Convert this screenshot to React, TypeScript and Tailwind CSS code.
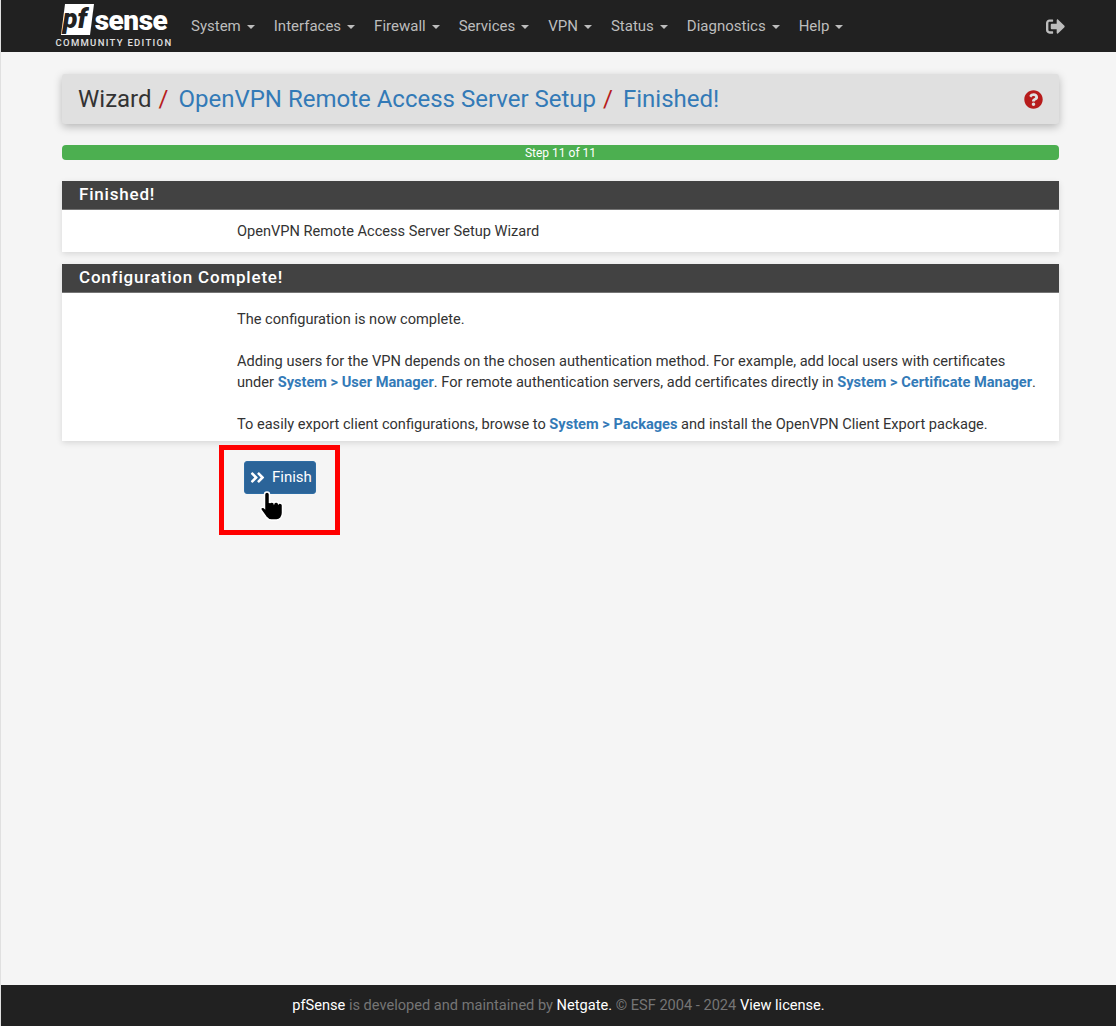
import React from 'react'
import { FaAngleDoubleRight, FaQuestionCircle, FaSignOutAlt } from 'react-icons/fa'

const menus = ['System', 'Interfaces', 'Firewall', 'Services', 'VPN', 'Status', 'Diagnostics', 'Help']

function Logo() {
  return (
    <div className="flex w-[112px] flex-col items-center">
      <div className="flex h-[31px] items-end">
        <div className="relative h-[31px] w-[33px]">
          <svg viewBox="0 0 33 31" className="absolute inset-0 h-full w-full">
            <path d="M4 0H33L29 31H0Z" fill="#fff" />
          </svg>
          <span className="absolute bottom-[1px] left-[2px] text-[27px] leading-[30px] font-black text-[#212121] italic">pf</span>
        </div>
        <span className="ml-[1px] text-[28px] leading-[28px] font-black tracking-[-0.5px] text-white">sense</span>
      </div>
      <span className="mt-[2px] text-[9.5px] leading-[11px] font-medium tracking-[1.3px] whitespace-nowrap text-[#e0e0e0]">COMMUNITY EDITION</span>
    </div>
  )
}

function Navbar() {
  return (
    <nav className="flex h-[52px] items-center bg-[#212121] pr-[51px] pl-[57px]">
      <Logo />
      <ul className="ml-[21px] flex gap-[19px]">
        {menus.map((m) => (
          <li key={m} className="flex items-center gap-[6px] text-[15px] text-[#bdbdbd]">
            {m}
            <span className="mt-[2px] h-0 w-0 border-x-[4px] border-t-[4px] border-x-transparent border-t-[#bdbdbd]" />
          </li>
        ))}
      </ul>
      <FaSignOutAlt className="ml-auto text-[19px] text-[#bdbdbd]" />
    </nav>
  )
}

function Panel({ title, children }: { title: string; children: React.ReactNode }) {
  return (
    <section className="bg-white shadow-[0_2px_6px_rgba(0,0,0,0.12)]">
      <h2 className="flex h-[29px] items-center border-b border-[#757575] bg-[#424242] px-[17px] text-[17px] font-medium tracking-[0.8px] text-white">{title}</h2>
      <div className="pl-[175px] text-[14.6px] leading-[21px] text-[#333]">{children}</div>
    </section>
  )
}

function Link({ children }: { children: React.ReactNode }) {
  return <b className="font-bold text-[#337ab7]">{children}</b>
}

export default function App() {
  return (
    <div className="flex min-h-[1026px] flex-col border-l border-[#e0e0e0] bg-[#f5f5f5] font-['Roboto',sans-serif]">
      <Navbar />
      <main className="relative flex-1 pt-[22px] pr-[57px] pl-[61px]">
        <header className="flex h-[50px] items-center justify-between rounded-[3px] bg-[#e0e0e0] pr-[16px] pl-[16px] text-[24px] text-[#333] shadow-[0_3px_8px_rgba(0,0,0,0.25)]">
          <div className="flex items-center whitespace-nowrap">
            Wizard<span className="mr-[10px] ml-[7px] text-[#b71c1c]">/</span>
            <span className="text-[#337ab7]">OpenVPN Remote Access Server Setup</span>
            <span className="mr-[10px] ml-[7px] text-[#b71c1c]">/</span>
            <span className="text-[#337ab7]">Finished!</span>
          </div>
          <FaQuestionCircle className="text-[19px] text-[#b71c1c]" />
        </header>

        <div className="mt-[21px] flex h-[15px] items-center justify-center rounded-[4px] bg-[#4caf50] text-[12px] text-white">Step 11 of 11</div>

        <div className="mt-[21px] flex flex-col gap-[12px]">
          <Panel title="Finished!">
            <p className="flex h-[42px] items-center">OpenVPN Remote Access Server Setup Wizard</p>
          </Panel>
          <Panel title="Configuration Complete!">
            <div className="pt-[16px] pb-[6px]">
              <p className="mb-[21px]">The configuration is now complete.</p>
              <p className="mb-[21px]">
                Adding users for the VPN depends on the chosen authentication method. For example, add local users with certificates
                <br />
                under <Link>System &gt; User Manager</Link>. For remote authentication servers, add certificates directly in <Link>System &gt; Certificate Manager</Link>.
              </p>
              <p>
                To easily export client configurations, browse to <Link>System &gt; Packages</Link> and install the OpenVPN Client Export package.
              </p>
            </div>
          </Panel>
        </div>

        <button className="mt-[20px] ml-[182px] flex h-[33px] w-[72px] items-center gap-[6px] rounded-[3px] border border-[#2e6da4] bg-[#2b6499] pl-[4px] text-[15px] text-white">
          <FaAngleDoubleRight className="text-[17px]" />
          Finish
        </button>

        {/* annotation drawn over the screenshot */}
        <div className="absolute top-[393px] left-[218px] h-[90px] w-[121px] border-[5px] border-[#ff0000]" />
        <svg viewBox="0 0 30 32" className="absolute top-[438px] left-[258px] h-[32px] w-[30px]">
          <path d="M8 2c1.5 0 2.5 1 2.5 2.5V13c.5-1.5 4-1.5 4.500 0 .5-1.300 4-1.300 4.500.5 1-1 4-.5 4 2V23c0 4-2.500 7-6 7h-5c-2.500 0-4-1-5.500-3L2 20c-1-2 1-3.500 3-2.500l.5.5V4.500C5.500 3 6.500 2 8 2Z" fill="#000" stroke="#fff" strokeWidth="1.500" />
        </svg>
      </main>
      <footer className="flex h-[41px] items-center justify-center bg-[#212121] text-[14.6px] text-[#757575]">
        <span>
          <span className="text-white">pfSense</span> is developed and maintained by <span className="text-white">Netgate.</span> © ESF 2004 - 2024 <span className="text-white">View license.</span>
        </span>
      </footer>
    </div>
  )
}
